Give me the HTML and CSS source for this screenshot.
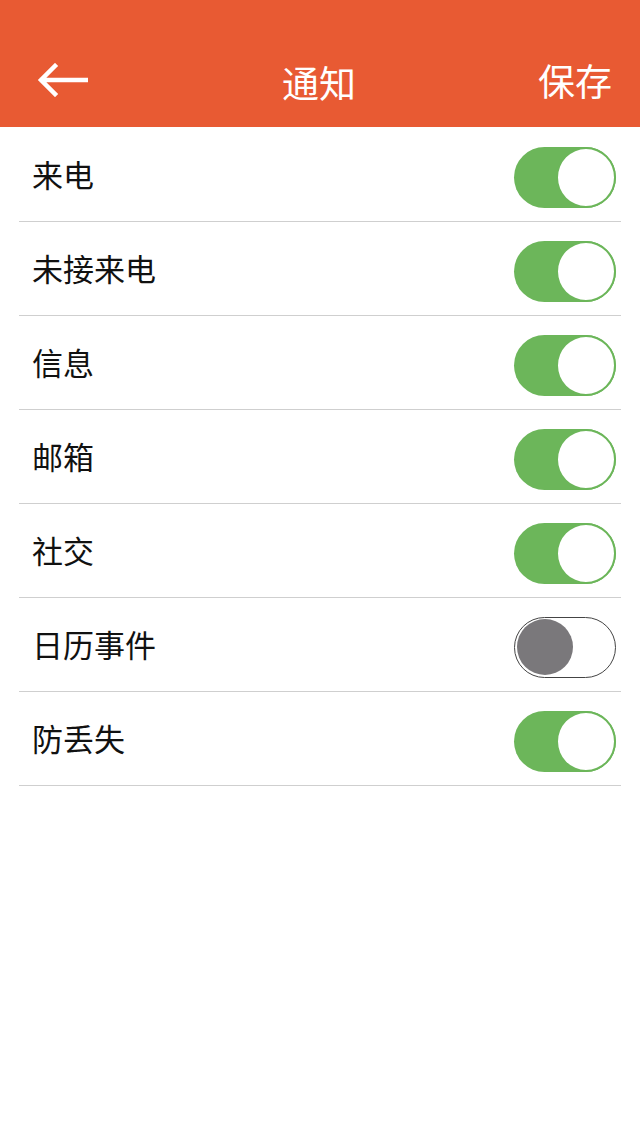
FILE: index.html
```html
<!DOCTYPE html>
<html lang="zh-CN">
<head>
    <meta charset="UTF-8">
    <meta name="viewport" content="width=device-width, initial-scale=1.0">
    <title>通知</title>
    <link rel="stylesheet" href="styles.css">
</head>
<body>
    <div class="header">
        <span class="back">
            <svg width="52" height="34" viewBox="0 0 52 34">
                <path d="M50 17H6M19 3L5 17l14 14" fill="none" stroke="#fff" stroke-width="4.5" stroke-linecap="square"/>
            </svg>
        </span>
        <span class="title">通知</span>
        <span class="save">保存</span>
    </div>
    <ul class="list">
        <li><span>来电</span><i class="switch on"></i></li>
        <li><span>未接来电</span><i class="switch on"></i></li>
        <li><span>信息</span><i class="switch on"></i></li>
        <li><span>邮箱</span><i class="switch on"></i></li>
        <li><span>社交</span><i class="switch on"></i></li>
        <li><span>日历事件</span><i class="switch"></i></li>
        <li><span>防丢失</span><i class="switch on"></i></li>
    </ul>
</body>
</html>
```

FILE: styles.css
```css
body {margin:0; background:#fff; font-family:"Noto Sans CJK SC", "Noto Sans", sans-serif;}
.header {height:127px; background:#e85a33; color:#fff; display:flex; align-items:flex-end; justify-content:space-between; padding:0 28px 25px 36px; box-sizing:border-box; position:relative;}
.back {display:flex; width:80px; padding-bottom:5px;}
.title {font-size:37px; line-height:40px; position:absolute; left:0; right:0; bottom:25px; text-align:center; padding-right:2px;}
.save {font-size:37px; line-height:40px; margin-bottom:2px;}
.list {list-style:none; margin:0 19px; padding:1px 0 0;}
.list li {height:93px; border-bottom:1px solid #cfcfcf; display:flex; align-items:center; justify-content:space-between; padding:0 5px 0 13px;}
.list li span {font-size:31px; color:#111; line-height:40px; margin-top:-2px;}
.switch {width:102px; height:61px; margin-top:5px; border-radius:31px; box-sizing:border-box; border:1px solid #444; background:#fff; position:relative; display:block;}
.switch::after {content:""; position:absolute; width:56px; height:56px; border-radius:50%; top:1.5px; left:2px; background:#7a787b;}
.switch.on {background:#6cb65a; border:none;}
.switch.on::after {background:#fff; width:56px; height:57px; border:2px solid #6cb65a; top:0; right:0; left:auto; box-sizing:content-box;}
```
